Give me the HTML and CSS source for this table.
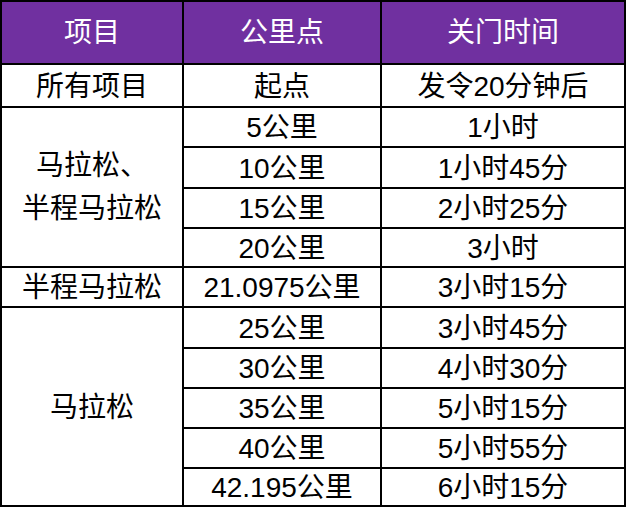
FILE: index.html
```html
<!DOCTYPE html>
<html lang="zh-CN">
<head>
<meta charset="utf-8">
<title>关门时间</title>
<link rel="stylesheet" href="styles.css">
</head>
<body>
<div class="table" role="table">
  <div class="cell head">项目</div>
  <div class="cell head">公里点</div>
  <div class="cell head">关门时间</div>

  <div class="cell">所有项目</div>
  <div class="cell">起点</div>
  <div class="cell">发令20分钟后</div>

  <div class="cell span4">马拉松、<br>半程马拉松</div>
  <div class="cell">5公里</div>
  <div class="cell">1小时</div>
  <div class="cell">10公里</div>
  <div class="cell">1小时45分</div>
  <div class="cell">15公里</div>
  <div class="cell">2小时25分</div>
  <div class="cell">20公里</div>
  <div class="cell">3小时</div>

  <div class="cell">半程马拉松</div>
  <div class="cell">21.0975公里</div>
  <div class="cell">3小时15分</div>

  <div class="cell span5">马拉松</div>
  <div class="cell">25公里</div>
  <div class="cell">3小时45分</div>
  <div class="cell">30公里</div>
  <div class="cell">4小时30分</div>
  <div class="cell">35公里</div>
  <div class="cell">5小时15分</div>
  <div class="cell">40公里</div>
  <div class="cell">5小时55分</div>
  <div class="cell">42.195公里</div>
  <div class="cell">6小时15分</div>
</div>
</body>
</html>
```

FILE: styles.css
```css
html, body {
  margin: 0;
  padding: 0;
  background: #ffffff;
}

.table {
  display: grid;
  width: 626px;
  box-sizing: border-box;
  padding: 2px;
  gap: 2px;
  background: #000000;
  grid-template-columns: 180px 196px 242px;
  grid-template-rows: 61px 41px 38px 39px 38px 37px 38px 39px 38px 38px 38px 36px;
  font-family: "Liberation Sans", "Noto Sans CJK SC", sans-serif;
  font-size: 28px;
  color: #000000;
}

.cell {
  background: #ffffff;
  display: flex;
  align-items: center;
  justify-content: center;
  text-align: center;
  line-height: 38px;
  white-space: nowrap;
  padding-top: 2px;
  box-sizing: border-box;
}

.head {
  background: #7030a0;
  color: #ffffff;
  padding-top: 0;
}

.span4 {
  grid-row: span 4;
  line-height: 43px;
  padding-top: 0;
}

.span5 {
  grid-row: span 5;
}
```
